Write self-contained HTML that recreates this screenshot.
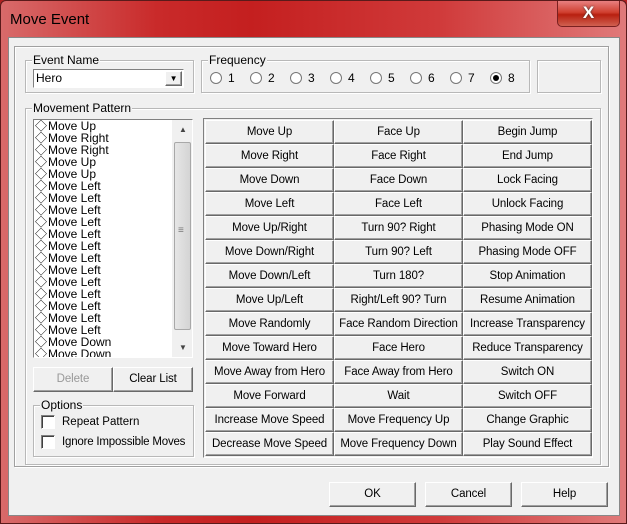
<!DOCTYPE html>
<html><head><style>
*{box-sizing:border-box;margin:0;padding:0}
body{width:627px;height:524px;overflow:hidden;font-family:"Liberation Sans","Noto Sans CJK JP",sans-serif;font-size:12px;color:#000;background:#b02020}
.win{position:absolute;left:0;top:0;width:627px;height:524px;background:linear-gradient(90deg,#d86a6a 0%,#c92a2a 25%,#c41f1f 40%,#d03a3a 70%,#e07a7a 100%);border:1px solid #5a1a1a;border-radius:6px 6px 0 0}
.title{position:absolute;left:9px;top:10px;font-size:15px;color:#000}
.close{position:absolute;left:556px;top:0;width:63px;height:26px;border:1px solid #7a2020;border-top:none;border-radius:0 0 5px 5px;background:linear-gradient(#e88080,#d04030 45%,#b82010 55%,#d06050);color:#fff;font-weight:bold;font-size:17px;text-align:center;line-height:24px;text-shadow:0 0 2px #333}
.client{position:absolute;left:8px;top:37px;width:612px;height:479px;background:#f0f0f0;border:1px solid #888}
.a{position:absolute}
.grp{position:absolute;border:1px solid #b8b8b8;box-shadow:inset 1px 1px 0 #fff,1px 1px 0 #fff}
.gl{position:absolute;top:-8px;left:6px;background:#f0f0f0;padding:0 1px;font-size:12px}
.btn{position:absolute;background:#f0f0f0;border:1px solid;border-color:#fff #696969 #696969 #fff;box-shadow:inset -1px -1px 0 #a0a0a0;text-align:center;line-height:22px;font-size:11.5px;white-space:nowrap;letter-spacing:-0.1px}
.radio{position:absolute;width:12px;height:12px;border-radius:50%;border:1px solid #777;background:#fff;top:72px}
.rl{position:absolute;top:71px;font-size:12px}
.lb{position:absolute;left:33px;top:119px;width:160px;height:239px;background:#fff;border:1px solid;border-color:#808080 #fff #fff #808080;overflow:hidden}
.lb div{height:12px;line-height:12px;font-size:12px;padding-left:1px;white-space:nowrap}
.lb i{font-style:normal;font-family:"Noto Sans CJK JP",sans-serif;font-size:12px;display:inline-block;width:13px}
.cb{position:absolute;width:14px;height:14px;background:#fff;border:1px solid;border-color:#808080 #fff #fff #808080;box-shadow:inset 1px 1px 0 #404040}
</style></head><body>
<div class="win">
<div class="title">Move Event</div>
<div class="close">X</div>
</div>
<div class="client"></div>
<div class="grp" style="left:14px;top:46px;width:595px;height:421px;border-color:#a0a0a0"></div>

<div class="grp" style="left:25px;top:60px;width:169px;height:33px"><span class="gl">Event Name</span></div>
<div class="a" style="left:33px;top:69px;width:151px;height:19px;background:#fff;border:1px solid;border-color:#808080 #fff #fff #808080;padding-left:2px;line-height:17px">Hero</div>
<div class="btn" style="left:165px;top:71px;width:17px;height:15px;line-height:13px;font-size:8px">▼</div>

<div class="grp" style="left:201px;top:60px;width:329px;height:33px"><span class="gl">Frequency</span></div>
<div class="radio" style="left:210px"></div><div class="rl" style="left:228px">1</div>
<div class="radio" style="left:250px"></div><div class="rl" style="left:268px">2</div>
<div class="radio" style="left:290px"></div><div class="rl" style="left:308px">3</div>
<div class="radio" style="left:330px"></div><div class="rl" style="left:348px">4</div>
<div class="radio" style="left:370px"></div><div class="rl" style="left:388px">5</div>
<div class="radio" style="left:410px"></div><div class="rl" style="left:428px">6</div>
<div class="radio" style="left:450px"></div><div class="rl" style="left:468px">7</div>
<div class="radio" style="left:490px"><div style="position:absolute;left:2px;top:2px;width:6px;height:6px;border-radius:50%;background:#000"></div></div><div class="rl" style="left:508px">8</div>
<div class="grp" style="left:537px;top:60px;width:64px;height:33px"></div>

<div class="grp" style="left:25px;top:108px;width:576px;height:357px"><span class="gl">Movement Pattern</span></div>
<div class="lb">
<div><i>◇</i>Move Up</div><div><i>◇</i>Move Right</div><div><i>◇</i>Move Right</div><div><i>◇</i>Move Up</div><div><i>◇</i>Move Up</div><div><i>◇</i>Move Left</div><div><i>◇</i>Move Left</div><div><i>◇</i>Move Left</div><div><i>◇</i>Move Left</div><div><i>◇</i>Move Left</div><div><i>◇</i>Move Left</div><div><i>◇</i>Move Left</div><div><i>◇</i>Move Left</div><div><i>◇</i>Move Left</div><div><i>◇</i>Move Left</div><div><i>◇</i>Move Left</div><div><i>◇</i>Move Left</div><div><i>◇</i>Move Left</div><div><i>◇</i>Move Down</div><div><i>◇</i>Move Down</div>
<div style="position:absolute;left:138px;top:0;width:20px;height:237px;background:#f0f0f0;padding:0">
<div style="position:absolute;left:2px;top:22px;width:17px;height:188px;background:linear-gradient(90deg,#e6e6e6,#d4d4d4);border:1px solid #a8a8a8;border-radius:2px"></div>
<div style="position:absolute;left:6px;top:4px;font-size:8px;color:#444">▲</div>
<div style="position:absolute;left:6px;top:222px;font-size:8px;color:#444">▼</div>
<div style="position:absolute;left:5px;top:108px;font-size:10px;color:#777;line-height:5px">≡</div>
</div>
</div>
<div class="btn" style="left:33px;top:367px;width:80px;height:25px;color:#999">Delete</div>
<div class="btn" style="left:113px;top:367px;width:80px;height:25px">Clear List</div>
<div class="grp" style="left:33px;top:405px;width:161px;height:52px"><span class="gl">Options</span></div>
<div class="cb" style="left:41px;top:415px"></div><div class="a" style="left:62px;top:416px;font-size:11.5px">Repeat Pattern</div>
<div class="cb" style="left:41px;top:435px"></div><div class="a" style="left:62px;top:436px;font-size:11.5px;letter-spacing:-0.2px">Ignore Impossible Moves</div>

<div class="a" style="left:203px;top:118px;width:390px;height:340px;border:1px solid;border-color:#808080 #fff #fff #808080"></div>

<div class="btn" style="left:329px;top:482px;width:87px;height:25px">OK</div>
<div class="btn" style="left:425px;top:482px;width:87px;height:25px">Cancel</div>
<div class="btn" style="left:521px;top:482px;width:87px;height:25px">Help</div>

<div class="btn" style="left:205px;top:120px;width:129px;height:24px">Move Up</div><div class="btn" style="left:334px;top:120px;width:129px;height:24px">Face Up</div><div class="btn" style="left:463px;top:120px;width:129px;height:24px">Begin Jump</div>
<div class="btn" style="left:205px;top:144px;width:129px;height:24px">Move Right</div><div class="btn" style="left:334px;top:144px;width:129px;height:24px">Face Right</div><div class="btn" style="left:463px;top:144px;width:129px;height:24px">End Jump</div>
<div class="btn" style="left:205px;top:168px;width:129px;height:24px">Move Down</div><div class="btn" style="left:334px;top:168px;width:129px;height:24px">Face Down</div><div class="btn" style="left:463px;top:168px;width:129px;height:24px">Lock Facing</div>
<div class="btn" style="left:205px;top:192px;width:129px;height:24px">Move Left</div><div class="btn" style="left:334px;top:192px;width:129px;height:24px">Face Left</div><div class="btn" style="left:463px;top:192px;width:129px;height:24px">Unlock Facing</div>
<div class="btn" style="left:205px;top:216px;width:129px;height:24px">Move Up/Right</div><div class="btn" style="left:334px;top:216px;width:129px;height:24px">Turn 90? Right</div><div class="btn" style="left:463px;top:216px;width:129px;height:24px">Phasing Mode ON</div>
<div class="btn" style="left:205px;top:240px;width:129px;height:24px">Move Down/Right</div><div class="btn" style="left:334px;top:240px;width:129px;height:24px">Turn 90? Left</div><div class="btn" style="left:463px;top:240px;width:129px;height:24px">Phasing Mode OFF</div>
<div class="btn" style="left:205px;top:264px;width:129px;height:24px">Move Down/Left</div><div class="btn" style="left:334px;top:264px;width:129px;height:24px">Turn 180?</div><div class="btn" style="left:463px;top:264px;width:129px;height:24px">Stop Animation</div>
<div class="btn" style="left:205px;top:288px;width:129px;height:24px">Move Up/Left</div><div class="btn" style="left:334px;top:288px;width:129px;height:24px">Right/Left 90? Turn</div><div class="btn" style="left:463px;top:288px;width:129px;height:24px">Resume Animation</div>
<div class="btn" style="left:205px;top:312px;width:129px;height:24px">Move Randomly</div><div class="btn" style="left:334px;top:312px;width:129px;height:24px">Face Random Direction</div><div class="btn" style="left:463px;top:312px;width:129px;height:24px">Increase Transparency</div>
<div class="btn" style="left:205px;top:336px;width:129px;height:24px">Move Toward Hero</div><div class="btn" style="left:334px;top:336px;width:129px;height:24px">Face Hero</div><div class="btn" style="left:463px;top:336px;width:129px;height:24px">Reduce Transparency</div>
<div class="btn" style="left:205px;top:360px;width:129px;height:24px">Move Away from Hero</div><div class="btn" style="left:334px;top:360px;width:129px;height:24px">Face Away from Hero</div><div class="btn" style="left:463px;top:360px;width:129px;height:24px">Switch ON</div>
<div class="btn" style="left:205px;top:384px;width:129px;height:24px">Move Forward</div><div class="btn" style="left:334px;top:384px;width:129px;height:24px">Wait</div><div class="btn" style="left:463px;top:384px;width:129px;height:24px">Switch OFF</div>
<div class="btn" style="left:205px;top:408px;width:129px;height:24px">Increase Move Speed</div><div class="btn" style="left:334px;top:408px;width:129px;height:24px">Move Frequency Up</div><div class="btn" style="left:463px;top:408px;width:129px;height:24px">Change Graphic</div>
<div class="btn" style="left:205px;top:432px;width:129px;height:24px">Decrease Move Speed</div><div class="btn" style="left:334px;top:432px;width:129px;height:24px">Move Frequency Down</div><div class="btn" style="left:463px;top:432px;width:129px;height:24px">Play Sound Effect</div>
</body></html>
